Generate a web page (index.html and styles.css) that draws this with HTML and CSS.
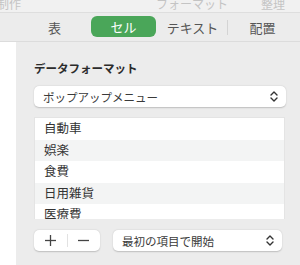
FILE: index.html
```html
<!DOCTYPE html>
<html lang="ja">
<head>
<meta charset="UTF-8">
<title>セル フォーマット</title>
<link rel="stylesheet" href="styles.css">
</head>
<body>
<div class="window">
  <div class="topbar">
    <span class="top-label label-make">制作</span>
    <span class="top-label label-format">フォーマット</span>
    <span class="top-label label-arrange">整理</span>
  </div>

  <div class="tabbar">
    <div class="tab">表</div>
    <div class="tab active">セル</div>
    <div class="tab">テキスト</div>
    <div class="tab-sep"></div>
    <div class="tab">配置</div>
  </div>

  <div class="main">
    <div class="side"></div>
    <div class="panel">
      <div class="heading">データフォーマット</div>

      <div class="popup">
        <span>ポップアップメニュー</span>
        <svg class="chevron" width="8" height="11" viewBox="0 0 8 11">
          <polyline points="1,4 4,1 7,4" />
          <polyline points="1,7 4,10 7,7" />
        </svg>
      </div>

      <div class="item-list">
        <div class="item">自動車</div>
        <div class="item">娯楽</div>
        <div class="item">食費</div>
        <div class="item">日用雑貨</div>
        <div class="item">医療費</div>
      </div>

      <div class="bottom-row">
        <div class="add-remove">
          <span class="btn-half">
            <svg width="11" height="11" viewBox="0 0 11 11"><line x1="5.5" y1="0" x2="5.5" y2="11" /><line x1="0" y1="5.5" x2="11" y2="5.5" /></svg>
          </span>
          <span class="btn-divider"></span>
          <span class="btn-half">
            <svg width="11" height="11" viewBox="0 0 11 11"><line x1="0" y1="5.5" x2="11" y2="5.5" /></svg>
          </span>
        </div>
        <div class="popup start-select">
          <span>最初の項目で開始</span>
          <svg class="chevron" width="8" height="11" viewBox="0 0 8 11">
            <polyline points="1,4 4,1 7,4" />
            <polyline points="1,7 4,10 7,7" />
          </svg>
        </div>
      </div>
    </div>
  </div>
</div>
</body>
</html>
```

FILE: styles.css
```css
body {
  margin: 0;
  font-family: "Noto Sans CJK JP", "Noto Sans", sans-serif;
  color: #333;
  background: #ececec;
}

.window {
  width: 300px;
  height: 265px;
  overflow: hidden;
  display: flex;
  flex-direction: column;
}

/* faded toolbar row, cut off at the top */
.topbar {
  height: 12px;
  flex: none;
  background: #f1f1f1;
  border-bottom: 1px solid #dedede;
  overflow: hidden;
  display: flex;
  font-size: 12px;
  line-height: 12px;
  color: #c4c4c4;
}

.top-label { margin-top: -2px; }
.label-make { margin-left: -3px; }
.label-format { margin-left: 135px; }
.label-arrange { margin-left: 33px; }

.tabbar {
  height: 28px;
  flex: none;
  display: flex;
  align-items: center;
  padding-left: 20px;
  background: #ececec;
  border-bottom: 1px solid #dcdcdc;
}

.tab {
  width: 69px;
  text-align: center;
  font-size: 13px;
  line-height: 21px;
  color: #555;
}

.tab.active {
  width: 65px;
  margin: -1px 2px 0;
  background: #4aa659;
  color: #fff;
  border-radius: 6px;
}

.tab-sep {
  width: 1px;
  height: 15px;
  background: #d4d4d4;
}

.main {
  flex: 1;
  display: flex;
}

.side {
  width: 16px;
  background: #fff;
}

.panel {
  flex: 1;
  background: #ececec;
  padding: 18px 14px 0 18px;
}

.heading {
  font-size: 11.5px;
  font-weight: bold;
  line-height: 16px;
  color: #2b2b2b;
  margin-bottom: 10px;
}

.popup {
  height: 21px;
  background: #fff;
  border-radius: 5px;
  box-shadow: 0 0.5px 1.5px rgba(0, 0, 0, 0.2);
  display: flex;
  align-items: center;
  justify-content: space-between;
  padding: 0 8px 0 9px;
  font-size: 11.5px;
  color: #3a3a3a;
}

.chevron polyline {
  fill: none;
  stroke: #333;
  stroke-width: 1.4;
  stroke-linecap: round;
  stroke-linejoin: round;
}

.item-list {
  width: 251px;
  height: 102px;
  margin-top: 10px;
  overflow: hidden;
  background: #fff;
  border: 1px solid #e4e4e4;
  border-bottom: none;
  box-sizing: border-box;
}

.item {
  height: 21.5px;
  line-height: 20px;
  padding-left: 9px;
  font-size: 12.5px;
  color: #333;
}

.item:nth-child(even) { background: #f3f4f4; }

.bottom-row {
  display: flex;
  gap: 13px;
  margin-top: 11px;
}

.add-remove {
  width: 66px;
  height: 21px;
  background: #fff;
  border-radius: 5px;
  box-shadow: 0 0.5px 1.5px rgba(0, 0, 0, 0.2);
  display: flex;
  align-items: center;
}

.btn-half {
  flex: 1;
  display: flex;
  justify-content: center;
}

.btn-half line {
  stroke: #444;
  stroke-width: 1.3;
}

.btn-divider {
  width: 1px;
  height: 13px;
  background: #e2e2e2;
}

.start-select {
  width: 169px;
  box-sizing: border-box;
}
```
